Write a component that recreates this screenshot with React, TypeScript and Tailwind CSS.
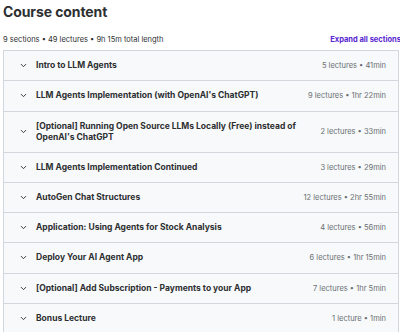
import { ChevronDown } from 'lucide-react';

const sections = [
  { title: 'Intro to LLM Agents', meta: '5 lectures • 41min' },
  { title: "LLM Agents Implementation (with OpenAI's ChatGPT)", meta: '9 lectures • 1hr 22min' },
  { title: "[Optional] Running Open Source LLMs Locally (Free) instead of OpenAI's ChatGPT", meta: '2 lectures • 33min' },
  { title: 'LLM Agents Implementation Continued', meta: '3 lectures • 29min' },
  { title: 'AutoGen Chat Structures', meta: '12 lectures • 2hr 55min' },
  { title: 'Application: Using Agents for Stock Analysis', meta: '4 lectures • 56min' },
  { title: 'Deploy Your AI Agent App', meta: '6 lectures • 1hr 15min' },
  { title: '[Optional] Add Subscription - Payments to your App', meta: '7 lectures • 1hr 5min' },
  { title: 'Bonus Lecture', meta: '1 lecture • 1min' },
];

export default function App() {
  return (
    <div className="w-[400px] h-[332px] bg-white overflow-hidden pl-[3px] pr-[1px] text-[#2d2f31]" style={{ fontFamily: 'Inter, "Noto Sans", sans-serif' }}>
      <h2 className="pt-[3px] text-[14px] leading-[18px] font-bold tracking-[-0.1px]">Course content</h2>
      <div className="mt-[13px] flex items-center justify-between h-[12px] whitespace-nowrap">
        <span className="text-[7.5px] text-[#2d2f31]">9 sections • 49 lectures • 9h 15m total length</span>
        <span className="text-[7.5px] font-bold text-[#5624d0] -mr-[2px]">Expand all sections</span>
      </div>
      <div className="mt-[4px] border border-[#d1d7dc]">
        {sections.map((s, i) => (
          <div
            key={i}
            className={`flex items-center bg-[#f7f9fa] pl-[15px] pr-[12px] py-[9px] ${i > 0 ? 'border-t border-[#d1d7dc]' : ''}`}
          >
            <ChevronDown className="w-[9px] h-[9px] shrink-0 text-[#2d2f31]" strokeWidth={2.5} />
            <div className="ml-[8px] flex-1 text-[8.5px] leading-[11px] font-bold pr-[24px]">{s.title}</div>
            <div className="text-[7.5px] text-[#6a6f73] whitespace-nowrap">{s.meta}</div>
          </div>
        ))}
      </div>
    </div>
  );
}
